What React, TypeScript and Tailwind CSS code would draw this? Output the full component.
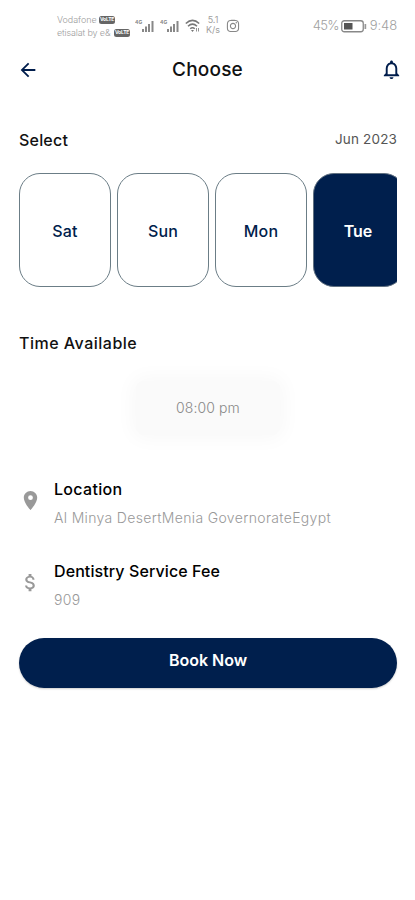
import type { ReactNode } from "react";
import { FaInstagram } from "react-icons/fa";
import {
  MdArrowBack,
  MdAttachMoney,
  MdLocationOn,
  MdNotificationsNone,
} from "react-icons/md";

const days = ["Sat", "Sun", "Mon"];

function Signal() {
  return (
    <svg width="20" height="14" viewBox="0 0 20 14" fill="#888">
      <text x="0" y="5" fontSize="5" fontWeight="700" fontFamily="Inter, sans-serif">4G</text>
      <rect x="7" y="10" width="2" height="3" />
      <rect x="10" y="7.5" width="2" height="5.5" />
      <rect x="13" y="5" width="2" height="8" />
      <rect x="16.5" y="2" width="2" height="11" />
    </svg>
  );
}

function Badge() {
  return (
    <span className="flex h-[8px] w-4 shrink-0 items-center justify-center rounded-[2.5px] bg-[#666] text-[5px] font-bold leading-none tracking-[-0.2px] text-white">
      VoLTE
    </span>
  );
}

function StatusBar() {
  return (
    <div className="flex h-[52px] items-start pl-[57px] pr-[18px] pt-[13px] text-[#a0a0a0]">
      <div className="w-[78px] text-[9px] leading-[13px]">
        <div className="flex h-[13px] items-center gap-[2px]">
          <span className="w-10 whitespace-nowrap font-light tracking-[-0.05px]">Vodafone</span>
          <Badge />
        </div>
        <div className="flex h-[13px] items-center gap-[2px]">
          <span className="w-[55px] whitespace-nowrap font-light tracking-[-0.15px]">etisalat by e&amp;</span>
          <Badge />
        </div>
      </div>
      <div className="mt-[6px] flex w-[50px] gap-[5px]">
        <Signal />
        <Signal />
      </div>
      <svg className="mt-[6px]" width="15" height="14" viewBox="0 0 15 14" fill="none" stroke="#777" strokeWidth="1.5">
        <path d="M.8 4.5Q7.5-1.8 14.2 4.5M3 7.2Q7.5 3 12 7.2M5.2 9.8Q7.5 7.7 9.8 9.8" />
        <path d="M6 11h3l-1.5 2z" fill="#777" stroke="none" />
        <path d="M11.5 9v3.5M13.5 12.5V9" strokeWidth=".8" />
      </svg>
      <div className="ml-[4px] mt-[2px] w-[18px] text-center text-[9px] leading-[10px]">
        <div>5.1</div>
        <div>K/s</div>
      </div>
      <FaInstagram className="ml-[4px] mt-[6px] text-[#888]" size={14} />
      <div className="ml-auto mt-[5px] flex h-4 items-center text-[13px] font-light">
        <span className="tracking-[-0.7px]">45%</span>
        <svg className="ml-[2px]" width="26" height="13" viewBox="0 0 26 13">
          <rect x=".75" y=".75" width="21.5" height="11" rx="2.5" fill="#fff" stroke="#888" strokeWidth="1.3" />
          <rect x="3" y="3" width="8.5" height="6.5" fill="#555" />
          <path d="M23.5 4h1.7v5h-1.7z" fill="#999" />
        </svg>
        <span className="ml-[3px] tracking-[-0.1px]">9:48</span>
      </div>
    </div>
  );
}

function Detail({ icon, title, children }: { icon: ReactNode; title: ReactNode; children: ReactNode }) {
  return (
    <div className="flex h-[82px]">
      <div className="w-[35px] shrink-0 pt-[12px] text-[#999]">{icon}</div>
      <div className="whitespace-nowrap">
        <h3 className="text-base font-medium leading-6 text-black">{title}</h3>
        <p className="mt-[7px] text-[14px] font-light leading-5 text-[#999]">{children}</p>
      </div>
    </div>
  );
}

export default function App() {
  return (
    <main className="h-[900px] w-[415px] overflow-hidden bg-white font-['Inter',sans-serif]">
      <StatusBar />
      <header className="flex h-9 items-center justify-between pl-[17px] pr-[12px] text-[#001d4c]">
        <MdArrowBack size={22} />
        <h1 className="-ml-[4px] text-[19px] font-medium tracking-[0.2px] text-[#111]">Choose</h1>
        <MdNotificationsNone className="-mt-[2px]" size={23} />
      </header>

      <section className="pl-[19px] pr-[18px] pt-[40px]">
        <div className="flex h-6 items-center justify-between">
          <h2 className="text-base font-medium tracking-[0.2px] text-[#111]">Select</h2>
          <span className="-mt-[2px] text-[13.5px] tracking-[0.15px] text-[#555]">Jun 2023</span>
        </div>
        <div className="mt-[21px] flex h-[114px] gap-[6px] overflow-hidden">
          {days.map((day) => (
            <button
              key={day}
              className="w-[92px] shrink-0 rounded-[21px] border border-[#6b7d86] pt-[2px] text-base font-medium tracking-[0.2px] text-[#001d4c]"
            >
              {day}
            </button>
          ))}
          <div className="w-[84px] shrink-0 overflow-hidden">
            <button className="h-full w-[92px] rounded-[21px] border border-[#607080] bg-[#001f4d] pr-[2px] pt-[2px] text-base font-semibold text-white">
              Tue
            </button>
          </div>
        </div>
      </section>

      <section className="pl-[19px] pr-[18px] pt-[44px]">
        <h2 className="h-6 text-base font-medium leading-6 tracking-[0.5px] text-[#111]">Time Available</h2>
        <div className="mt-[26px] flex justify-center">
          <button className="h-[54px] w-[144px] rounded-lg bg-[#fafafa] pb-[2px] text-[14px] font-light tracking-[0.1px] text-[#888] shadow-[0_0_20px_4px_#f8f8f8]">
            08:00 pm
          </button>
        </div>
      </section>

      <section className="h-[205px] px-[19px] pt-[42px]">
        <Detail
          icon={<MdLocationOn size={23} />}
          title={<span className="tracking-[0.3px]">Location</span>}
        >
          <span className="tracking-[0.34px]">Al Minya DesertMenia GovernorateEgypt</span>
        </Detail>
        <Detail
          icon={<MdAttachMoney size={23} />}
          title={<span className="tracking-[0.1px]">Dentistry Service Fee</span>}
        >
          <span className="tracking-[0.3px]">909</span>
        </Detail>
      </section>

      <div className="-mt-[2px] pl-[19px] pr-[18px]">
        <button className="h-[50px] w-full rounded-[25px] bg-[#001f4d] pb-[6px] text-base font-semibold text-white shadow-[0_1px_2px_#0003]">
          Book Now
        </button>
      </div>
    </main>
  );
}
